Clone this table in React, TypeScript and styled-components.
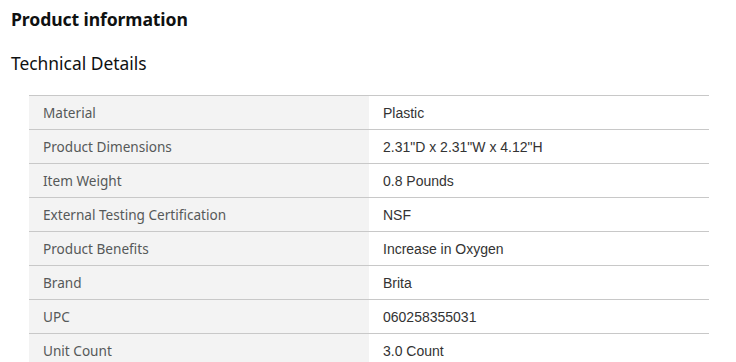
import React from 'react';
import styled, { createGlobalStyle } from 'styled-components';

const GlobalStyle = createGlobalStyle`
  html, body {
    margin: 0;
    padding: 0;
    background: #fff;
  }
`;

const Page = styled.div`
  padding: 7px 11px 0 11px;
  font-family: "Noto Sans", "Open Sans", sans-serif;
  color: #0f1111;
`;

const Title = styled.h2`
  margin: 0;
  font-size: 17.6px;
  line-height: 24px;
  font-weight: 700;
  letter-spacing: -0.1px;
`;

const SubTitle = styled.h3`
  margin: 20px 0 0 0;
  font-size: 17.4px;
  line-height: 24px;
  font-weight: 400;
`;

const Table = styled.table`
  margin: 20px 0 0 18px;
  width: 680px;
  border-collapse: collapse;
  border-top: 1px solid #c8c8c8;
`;

const Row = styled.tr`
  border-bottom: 1px solid #c8c8c8;
`;

const Label = styled.th`
  width: 340px;
  box-sizing: border-box;
  height: 34px;
  padding: 0 14px;
  background: #f3f3f3;
  text-align: left;
  font-weight: 400;
  font-size: 13.6px;
  color: #565959;
  font-family: "Noto Sans", "Open Sans", sans-serif;
`;

const Value = styled.td`
  padding: 0 14px;
  font-size: 14px;
  color: #333;
  font-family: "Liberation Sans", Arial, sans-serif;
`;

const details: [string, string][] = [
  ['Material', 'Plastic'],
  ['Product Dimensions', '2.31"D x 2.31"W x 4.12"H'],
  ['Item Weight', '0.8 Pounds'],
  ['External Testing Certification', 'NSF'],
  ['Product Benefits', 'Increase in Oxygen'],
  ['Brand', 'Brita'],
  ['UPC', '060258355031'],
  ['Unit Count', '3.0 Count'],
];

export default function App() {
  return (
    <>
      <GlobalStyle />
      <Page>
        <Title>Product information</Title>
        <SubTitle>Technical Details</SubTitle>
        <Table>
          <tbody>
            {details.map(([k, v]) => (
              <Row key={k}>
                <Label>{k}</Label>
                <Value>{v}</Value>
              </Row>
            ))}
          </tbody>
        </Table>
      </Page>
    </>
  );
}
